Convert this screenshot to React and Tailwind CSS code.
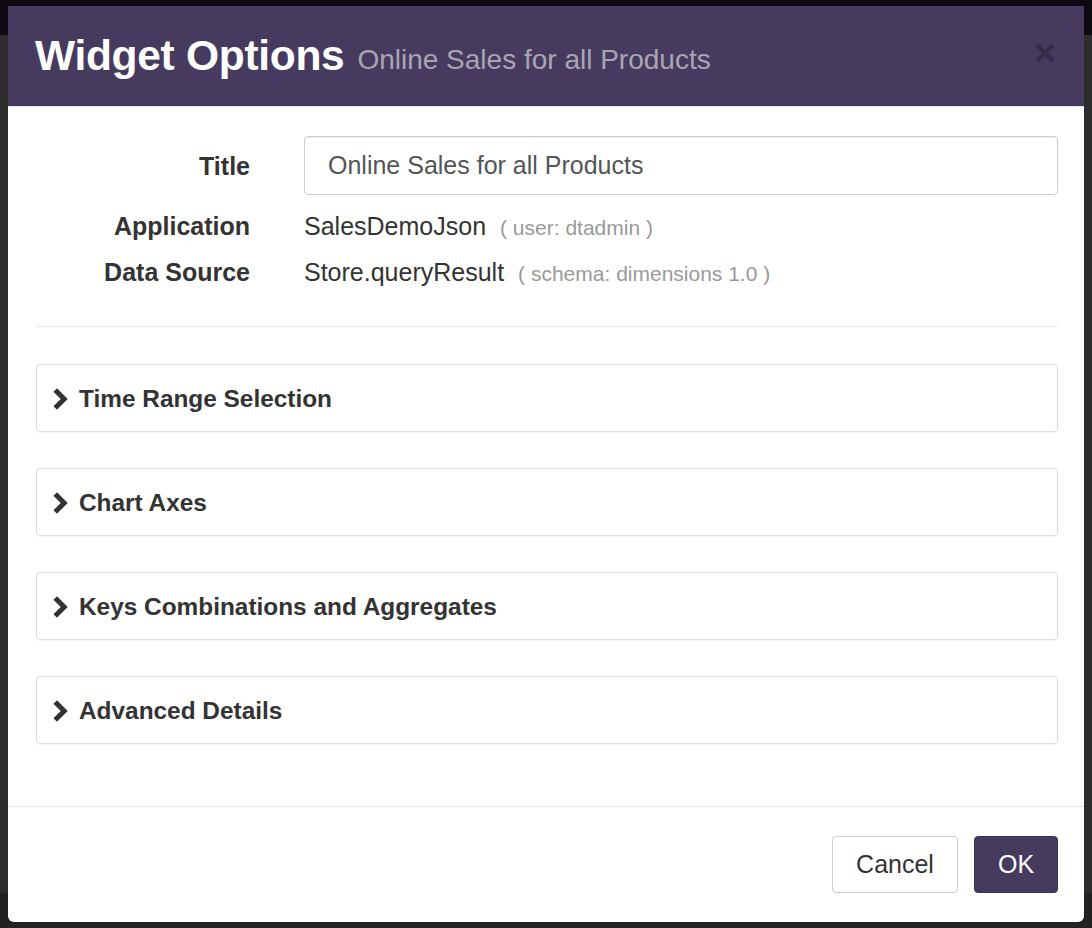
import React from "react";

const font = { fontFamily: '"Liberation Sans", Arial, Helvetica, sans-serif' };

function Chevron() {
  return (
    <svg width="16" height="22" viewBox="0 0 16 22" className="shrink-0 mt-[2px]">
      <polyline points="3.2,2 12.2,11 3.2,20" fill="none" stroke="#333" strokeWidth="5" strokeLinejoin="miter" strokeLinecap="butt" />
    </svg>
  );
}

function Panel({ title }) {
  return (
    <div className="h-[68px] border border-[#dddddd] rounded-[4px] shadow-[0_1px_1px_rgba(0,0,0,0.05)] flex items-center pl-[15px] gap-[11px]">
      <Chevron />
      <span className="text-[24.4px] font-bold text-[#333333] leading-none mt-[3px]">{title}</span>
    </div>
  );
}

export default function App() {
  return (
    <div className="relative w-[1092px] h-[928px] bg-[#2c2c2c] overflow-hidden" style={font}>
      <div className="h-[35px] bg-[#0c0a10]" />
      <div className="h-[858px] bg-[#2d2d2d]" />
      <div className="h-[35px] bg-[#222222]" />

      <div className="absolute left-[8px] top-[6px] w-[1076px] h-[916px] bg-white rounded-b-[6px] flex flex-col">
        <div className="h-[100px] bg-[#463b5e] flex items-center pl-[27px] pr-[28px] shrink-0">
          <span className="text-[42.5px] font-bold text-white leading-none tracking-[-0.3px]">Widget Options</span>
          <span className="text-[28px] text-[#a9a5b3] leading-none ml-[13px] mt-[8px]">Online Sales for all Products</span>
          <div className="ml-auto mt-[-6px]">
            <svg width="22" height="22" viewBox="0 0 22 22">
              <line x1="3" y1="3" x2="19" y2="19" stroke="#372d4b" strokeWidth="4.2" />
              <line x1="19" y1="3" x2="3" y2="19" stroke="#372d4b" strokeWidth="4.2" />
            </svg>
          </div>
        </div>
        <div className="h-px bg-[#e5e5e5] shrink-0" />

        <div className="flex-1 pl-[28px] pt-[29px] pr-[26px]">
          <div className="grid grid-cols-[214px_1fr] gap-x-[54px] gap-y-[16px] items-center">
            <div className="text-right text-[25px] font-bold text-[#333333] leading-[30px]">Title</div>
            <div className="h-[59px] border border-[#cccccc] rounded-[4px] flex items-center pl-[23px] text-[25px] text-[#555555] shadow-[inset_0_1px_1px_rgba(0,0,0,0.075)]">
              Online Sales for all Products
            </div>
            <div className="h-[30px] flex items-center justify-end text-[25px] font-bold text-[#333333] leading-none">Application</div>
            <div className="h-[30px] flex items-baseline text-[#333333] leading-[30px]">
              <span className="text-[25px]">SalesDemoJson</span>
              <span className="text-[21px] text-[#999999] ml-[14px]">( user: dtadmin )</span>
            </div>
            <div className="h-[30px] flex items-center justify-end text-[25px] font-bold text-[#333333] leading-none">Data Source</div>
            <div className="h-[30px] flex items-baseline text-[#333333] leading-[30px]">
              <span className="text-[25px]">Store.queryResult</span>
              <span className="text-[21px] text-[#999999] ml-[14px]">( schema: dimensions 1.0 )</span>
            </div>
          </div>

          <div className="h-px bg-[#e8e8e8] mt-[39px]" />

          <div className="mt-[37px] flex flex-col gap-[36px]">
            <Panel title="Time Range Selection" />
            <Panel title="Chart Axes" />
            <Panel title="Keys Combinations and Aggregates" />
            <Panel title="Advanced Details" />
          </div>
        </div>

        <div className="h-px bg-[#e5e5e5] shrink-0" />
        <div className="h-[115px] shrink-0 flex items-center justify-end pr-[26px] gap-[16px]">
          <button className="h-[57px] w-[126px] border border-[#cccccc] rounded-[4px] bg-white text-[25px] text-[#333333]" style={font}>Cancel</button>
          <button className="h-[57px] w-[84px] rounded-[4px] bg-[#463b5e] border border-[#3b3150] text-[25px] text-white" style={font}>OK</button>
        </div>
      </div>
    </div>
  );
}
